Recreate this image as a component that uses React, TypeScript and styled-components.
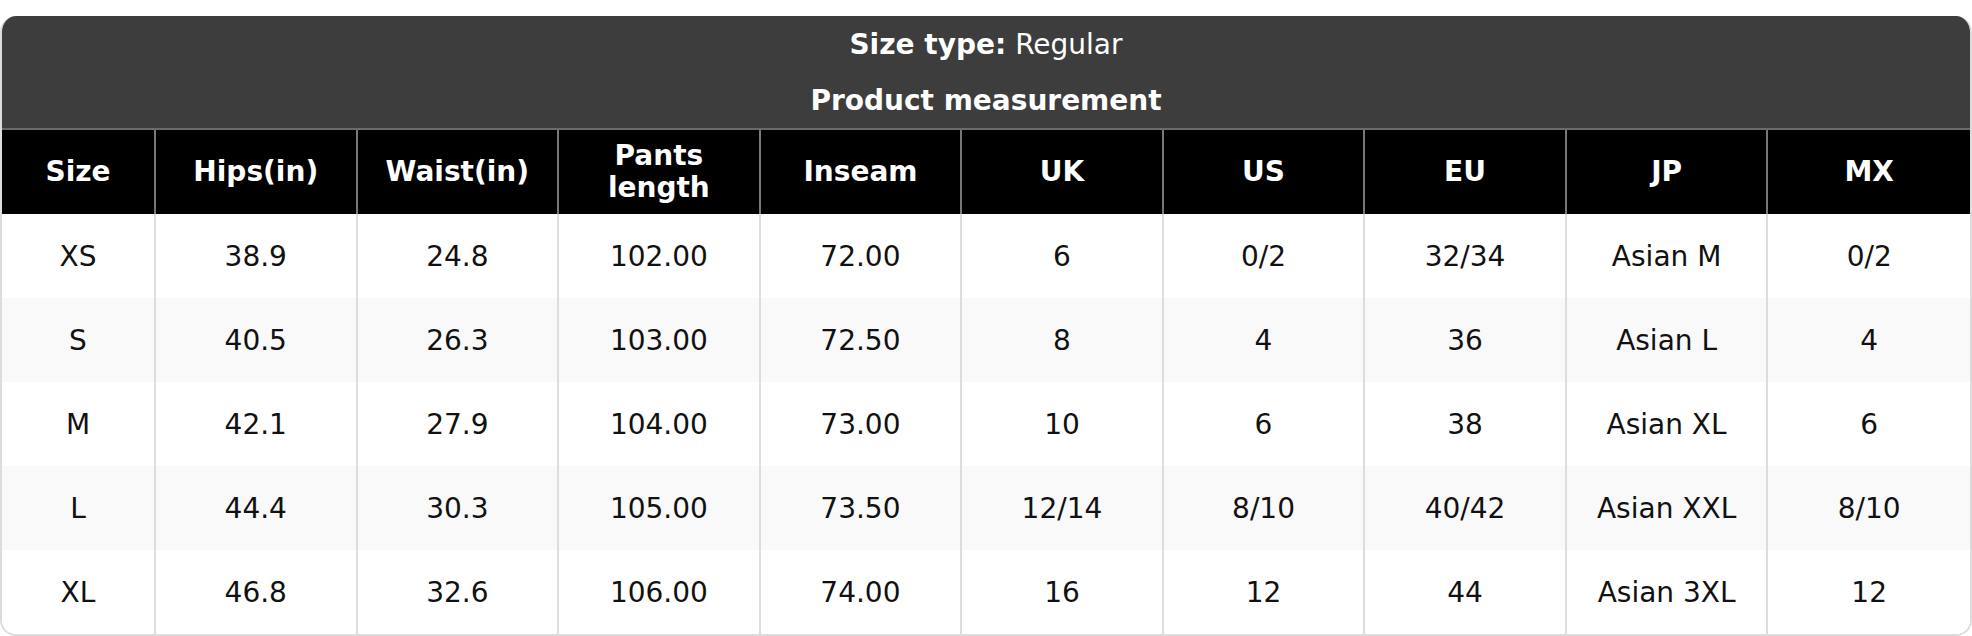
import styled, { createGlobalStyle } from 'styled-components';

const GlobalStyle = createGlobalStyle`
    html, body {
        margin: 0;
        padding: 0;
        background: #ffffff;
    }
    * {
        box-sizing: border-box;
    }
`;

const Page = styled.div`
    padding-top: 16px;
    font-family: 'DejaVu Sans', 'Liberation Sans', sans-serif;
`;

const Card = styled.div`
    border: 2px solid #dcdcdc;
    border-top: none;
    border-radius: 16px;
    overflow: hidden;
    background: #ffffff;
`;

const TitleBlock = styled.div`
    background: #3d3d3d;
    color: #ffffff;
    border-bottom: 2px solid #6a6a6a;
`;

const TitleLine = styled.div`
    height: 56px;
    display: flex;
    align-items: center;
    justify-content: center;
    font-size: 28px;
    font-weight: ${(p: { $bold?: boolean }) => (p.$bold ? 700 : 400)};
    b {
        font-weight: 700;
        margin-right: 9px;
    }
`;

const Table = styled.table`
    width: 100%;
    border-collapse: separate;
    border-spacing: 0;
    table-layout: fixed;
`;

const HeadCell = styled.th`
    background: #000000;
    color: #ffffff;
    font-size: 28px;
    font-weight: 700;
    line-height: 32px;
    padding: 10px 8px;
    height: 84px;
    text-align: center;
    border-right: 2px solid #777777;
    &:last-child {
        border-right: none;
    }
`;

const Row = styled.tr`
    background: ${(p: { $striped: boolean }) => (p.$striped ? '#f9f9f9' : '#ffffff')};
`;

const Cell = styled.td`
    height: 84px;
    padding: 0 8px;
    font-size: 28px;
    color: #111111;
    text-align: center;
    border-right: 2px solid #dddddd;
    &:last-child {
        border-right: none;
    }
`;

const headers = ['Size', 'Hips(in)', 'Waist(in)', 'Pants length', 'Inseam', 'UK', 'US', 'EU', 'JP', 'MX'];

const rows = [
    ['XS', '38.9', '24.8', '102.00', '72.00', '6', '0/2', '32/34', 'Asian M', '0/2'],
    ['S', '40.5', '26.3', '103.00', '72.50', '8', '4', '36', 'Asian L', '4'],
    ['M', '42.1', '27.9', '104.00', '73.00', '10', '6', '38', 'Asian XL', '6'],
    ['L', '44.4', '30.3', '105.00', '73.50', '12/14', '8/10', '40/42', 'Asian XXL', '8/10'],
    ['XL', '46.8', '32.6', '106.00', '74.00', '16', '12', '44', 'Asian 3XL', '12'],
];

function App() {
    return (
        <Page>
            <GlobalStyle />
            <Card>
                <TitleBlock>
                    <TitleLine>
                        <b>Size type:</b>Regular
                    </TitleLine>
                    <TitleLine $bold>Product measurement</TitleLine>
                </TitleBlock>
                <Table>
                    <colgroup>
                        <col style={{ width: 154 }} />
                        {headers.slice(1).map((h) => (
                            <col key={h} />
                        ))}
                    </colgroup>
                    <thead>
                        <tr>
                            {headers.map((h) => (
                                <HeadCell key={h}>{h}</HeadCell>
                            ))}
                        </tr>
                    </thead>
                    <tbody>
                        {rows.map((r, i) => (
                            <Row key={r[0]} $striped={i % 2 === 1}>
                                {r.map((v, j) => (
                                    <Cell key={j}>{v}</Cell>
                                ))}
                            </Row>
                        ))}
                    </tbody>
                </Table>
            </Card>
        </Page>
    );
}

export default App;
